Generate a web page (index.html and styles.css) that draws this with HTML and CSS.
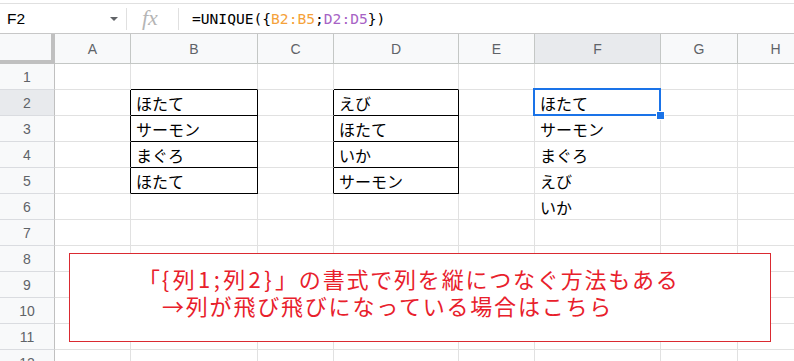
FILE: index.html
```html
<!DOCTYPE html>
<html lang="ja">
<head>
    <meta charset="UTF-8">
    <title>UNIQUE</title>
    <link rel="stylesheet" href="styles.css">
</head>
<body>
    <!-- Barra de fórmulas -->
    <div class="formula-bar">
        <div class="name-box">
            <span class="cell-ref">F2</span>
            <span class="caret"></span>
        </div>
        <div class="fx">fx</div>
        <div class="formula">=UNIQUE({<span class="ref-1">B2:B5</span>;<span class="ref-2">D2:D5</span>})</div>
    </div>

    <div class="sheet">
        <div class="grid">
            <!-- cabecera -->
            <div class="corner"></div>
            <div class="col-head">A</div>
            <div class="col-head">B</div>
            <div class="col-head">C</div>
            <div class="col-head">D</div>
            <div class="col-head">E</div>
            <div class="col-head active">F</div>
            <div class="col-head">G</div>
            <div class="col-head">H</div>

            <div class="row-head">1</div>
            <div class="cell"></div>
            <div class="cell line-b"></div>
            <div class="cell"></div>
            <div class="cell line-b"></div>
            <div class="cell"></div>
            <div class="cell"></div>
            <div class="cell"></div>
            <div class="cell"></div>

            <div class="row-head active">2</div>
            <div class="cell line-r"></div>
            <div class="cell line-r line-b">ほたて</div>
            <div class="cell line-r"></div>
            <div class="cell line-r line-b">えび</div>
            <div class="cell"></div>
            <div class="cell selected">ほたて</div>
            <div class="cell"></div>
            <div class="cell"></div>

            <div class="row-head">3</div>
            <div class="cell line-r"></div>
            <div class="cell line-r line-b">サーモン</div>
            <div class="cell line-r"></div>
            <div class="cell line-r line-b">ほたて</div>
            <div class="cell"></div>
            <div class="cell">サーモン</div>
            <div class="cell"></div>
            <div class="cell"></div>

            <div class="row-head">4</div>
            <div class="cell line-r"></div>
            <div class="cell line-r line-b">まぐろ</div>
            <div class="cell line-r"></div>
            <div class="cell line-r line-b">いか</div>
            <div class="cell"></div>
            <div class="cell">まぐろ</div>
            <div class="cell"></div>
            <div class="cell"></div>

            <div class="row-head">5</div>
            <div class="cell line-r"></div>
            <div class="cell line-r line-b">ほたて</div>
            <div class="cell line-r"></div>
            <div class="cell line-r line-b">サーモン</div>
            <div class="cell"></div>
            <div class="cell">えび</div>
            <div class="cell"></div>
            <div class="cell"></div>

            <div class="row-head">6</div>
            <div class="cell"></div>
            <div class="cell"></div>
            <div class="cell"></div>
            <div class="cell"></div>
            <div class="cell"></div>
            <div class="cell">いか</div>
            <div class="cell"></div>
            <div class="cell"></div>

            <div class="row-head">7</div>
            <div class="cell"></div><div class="cell"></div><div class="cell"></div><div class="cell"></div>
            <div class="cell"></div><div class="cell"></div><div class="cell"></div><div class="cell"></div>

            <div class="row-head">8</div>
            <div class="cell"></div><div class="cell"></div><div class="cell"></div><div class="cell"></div>
            <div class="cell"></div><div class="cell"></div><div class="cell"></div><div class="cell"></div>

            <div class="row-head">9</div>
            <div class="cell"></div><div class="cell"></div><div class="cell"></div><div class="cell"></div>
            <div class="cell"></div><div class="cell"></div><div class="cell"></div><div class="cell"></div>

            <div class="row-head">10</div>
            <div class="cell"></div><div class="cell"></div><div class="cell"></div><div class="cell"></div>
            <div class="cell"></div><div class="cell"></div><div class="cell"></div><div class="cell"></div>

            <div class="row-head">11</div>
            <div class="cell"></div><div class="cell"></div><div class="cell"></div><div class="cell"></div>
            <div class="cell"></div><div class="cell"></div><div class="cell"></div><div class="cell"></div>

            <div class="row-head">12</div>
            <div class="cell"></div><div class="cell"></div><div class="cell"></div><div class="cell"></div>
            <div class="cell"></div><div class="cell"></div><div class="cell"></div><div class="cell"></div>
        </div>

        <!-- Nota flotante -->
        <div class="note">
            <p>「<span class="pair">{列1;列2}</span>」の書式で列を縦につなぐ方法もある</p>
            <p class="second">→列が飛び飛びになっている場合はこちら</p>
        </div>
    </div>
</body>
</html>
```

FILE: styles.css
```css
/* Estilos generales */
body {
    margin: 0;
    width: 794px;
    height: 361px;
    overflow: hidden;
    background: #fff;
    font-family: "Liberation Sans", Arial, sans-serif;
}

/* Barra de fórmulas */
.formula-bar {
    display: flex;
    align-items: center;
    height: 29px;
    margin-top: 3px;
    border-top: 1px solid #e0e0e0;
    border-bottom: 1px solid #c7c7c7;
}

.name-box {
    display: flex;
    align-items: center;
    justify-content: space-between;
    width: 127px;
    height: 22px;
    padding: 0 8px 0 7px;
    box-sizing: border-box;
    border-right: 1px solid #e0e0e0;
}

.cell-ref {
    font-size: 15.5px;
    color: #000;
}

.caret {
    width: 0;
    height: 0;
    border-left: 4px solid transparent;
    border-right: 4px solid transparent;
    border-top: 4px solid #606367;
}

.fx {
    width: 52px;
    height: 22px;
    padding-left: 15px;
    box-sizing: border-box;
    border-right: 1px solid #e0e0e0;
    font-family: "Liberation Serif", serif;
    font-style: italic;
    font-size: 22px;
    line-height: 20px;
    color: #b5b5b5;
}

.formula {
    padding-left: 13px;
    font-family: "DejaVu Sans Mono", monospace;
    font-size: 14.6px;
    color: #000;
}

.ref-1 { color: #f5a23a; }
.ref-2 { color: #a763c5; }

/* Hoja */
.sheet {
    position: relative;
}

.grid {
    display: grid;
    grid-template-columns: 55px 76px 127px 76px 125px 76px 126px 77px 76px;
    grid-template-rows: 30px;
    grid-auto-rows: 26px;
}

.corner {
    background: #f8f9fa;
    border-right: 4px solid #c0c0c0;
    border-bottom: 4px solid #c0c0c0;
}

.col-head,
.row-head {
    display: flex;
    align-items: center;
    justify-content: center;
    background: #f8f9fa;
    color: #5f6368;
    font-size: 14px;
    border-right: 1px solid #c4c7c5;
    border-bottom: 1px solid #c4c7c5;
}

.row-head {
    border-bottom-color: #dadce0;
    border-right-color: #c0c0c0;
}

.col-head.active,
.row-head.active {
    background: #e8eaed;
}

.cell {
    display: flex;
    align-items: center;
    padding: 1px 0 0 5px;
    border-right: 1px solid #e1e1e1;
    border-bottom: 1px solid #e1e1e1;
    font-family: "Noto Sans CJK JP", sans-serif;
    font-size: 16px;
    color: #000;
    white-space: nowrap;
}

.cell.line-r { border-right-color: #000; }
.cell.line-b { border-bottom-color: #000; }

.cell.selected {
    position: relative;
    z-index: 2;
}

.cell.selected::after {
    content: "";
    position: absolute;
    top: -2px;
    left: -2px;
    right: -1px;
    bottom: -1px;
    border: 2px solid #1a73e8;
}

.cell.selected::before {
    content: "";
    position: absolute;
    right: -5px;
    bottom: -5px;
    width: 7px;
    height: 7px;
    background: #1a73e8;
    border: 1px solid #fff;
    z-index: 1;
}

/* Nota roja */
.note {
    position: absolute;
    left: 69px;
    top: 219px;
    width: 702px;
    height: 89px;
    box-sizing: border-box;
    border: 1px solid #da2a31;
    background: #fff;
    padding: 11px 0 0 68px;
    font-family: "Noto Sans CJK JP", sans-serif;
    font-size: 22px;
    line-height: 27px;
    letter-spacing: 1.8px;
    color: #e8202b;
}

.note p {
    margin: 0;
    white-space: nowrap;
}

.note .pair {
    letter-spacing: 3.4px;
}

.note .second {
    padding-left: 24px;
}
```
